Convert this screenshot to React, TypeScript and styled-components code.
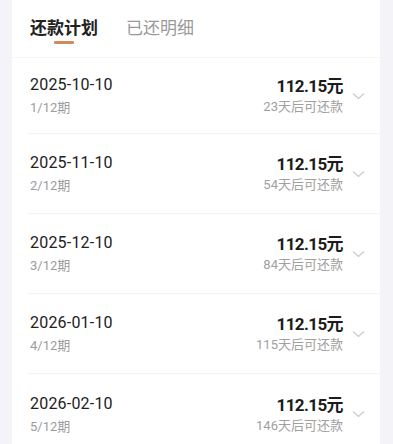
import React from "react";
import styled, { createGlobalStyle } from "styled-components";

const GlobalStyle = createGlobalStyle`
  html, body {
    margin: 0;
    padding: 0;
    background: #f4f4f8;
    font-family: Roboto, "Noto Sans CJK SC", sans-serif;
  }
  * { box-sizing: border-box; }
`;

const Page = styled.div`
  width: 393px;
  height: 444px;
  overflow: hidden;
  padding: 0 13px 0 12px;
  background: #f4f4f8;
`;

const Card = styled.div`
  background: #ffffff;
  min-height: 444px;
  display: flex;
  flex-direction: column;
`;

const Tabs = styled.div`
  height: 58px;
  display: flex;
  align-items: flex-start;
  gap: 28px;
  padding: 16px 0 0 18px;
  border-bottom: 1px solid #f8f4ee;
`;

const Tab = styled.div<{ $active?: boolean }>`
  position: relative;
  font-family: "Noto Sans CJK SC", sans-serif;
  font-size: 17px;
  line-height: 22px;
  font-weight: ${(p) => (p.$active ? 700 : 400)};
  color: ${(p) => (p.$active ? "#222222" : "#9a9a9a")};
  &::after {
    content: "";
    display: ${(p) => (p.$active ? "block" : "none")};
    position: absolute;
    left: 50%;
    top: 25px;
    width: 20px;
    height: 3px;
    margin-left: -10px;
    border-radius: 1px;
    background: #d48a5e;
  }
`;

const List = styled.div`
  display: flex;
  flex-direction: column;
`;

const Row = styled.div`
  height: 80px;
  margin-left: 16px;
  padding: 0 15px 0 2px;
  display: flex;
  align-items: center;
  border-bottom: 1px solid #f3f3f3;
  &:first-child {
    height: 76px;
  }
  &:last-child {
    border-bottom: none;
  }
`;

const Left = styled.div`
  flex: 1;
  display: flex;
  flex-direction: column;
`;

const DateText = styled.div`
  font-family: Roboto, sans-serif;
  font-size: 16px;
  line-height: 22px;
  color: #222222;
  letter-spacing: 0.2px;
`;

const Period = styled.div`
  margin-top: 3px;
  font-family: Roboto, "Noto Sans CJK SC", sans-serif;
  font-size: 13px;
  line-height: 18px;
  color: #9c9c9c;
`;

const Right = styled.div`
  display: flex;
  flex-direction: column;
  align-items: flex-end;
`;

const Amount = styled.div`
  font-family: Roboto, "Noto Sans CJK SC", sans-serif;
  font-size: 17px;
  line-height: 22px;
  font-weight: 700;
  color: #1c1c1c;
  letter-spacing: -0.6px;
`;

const Due = styled.div`
  margin-top: 1px;
  font-family: Roboto, "Noto Sans CJK SC", sans-serif;
  font-size: 13px;
  line-height: 18px;
  color: #a0a0a0;
`;

const Chevron = styled.svg`
  width: 13px;
  height: 8px;
  margin-left: 9px;
  flex-shrink: 0;
`;

const rows = [
  { date: "2025-10-10", period: "1/12期", days: 23 },
  { date: "2025-11-10", period: "2/12期", days: 54 },
  { date: "2025-12-10", period: "3/12期", days: 84 },
  { date: "2026-01-10", period: "4/12期", days: 115 },
  { date: "2026-02-10", period: "5/12期", days: 146 },
];

export default function App() {
  return (
    <>
      <GlobalStyle />
      <Page>
        <Card>
          <Tabs>
            <Tab $active>还款计划</Tab>
            <Tab>已还明细</Tab>
          </Tabs>
          <List>
            {rows.map((r) => (
              <Row key={r.date}>
                <Left>
                  <DateText>{r.date}</DateText>
                  <Period>{r.period}</Period>
                </Left>
                <Right>
                  <Amount>112.15元</Amount>
                  <Due>{r.days}天后可还款</Due>
                </Right>
                <Chevron viewBox="0 0 13 8">
                  <path d="M1 1.5 L6.5 6.5 L12 1.5" fill="none" stroke="#c9c9c9" strokeWidth="1.1" />
                </Chevron>
              </Row>
            ))}
          </List>
        </Card>
      </Page>
    </>
  );
}
